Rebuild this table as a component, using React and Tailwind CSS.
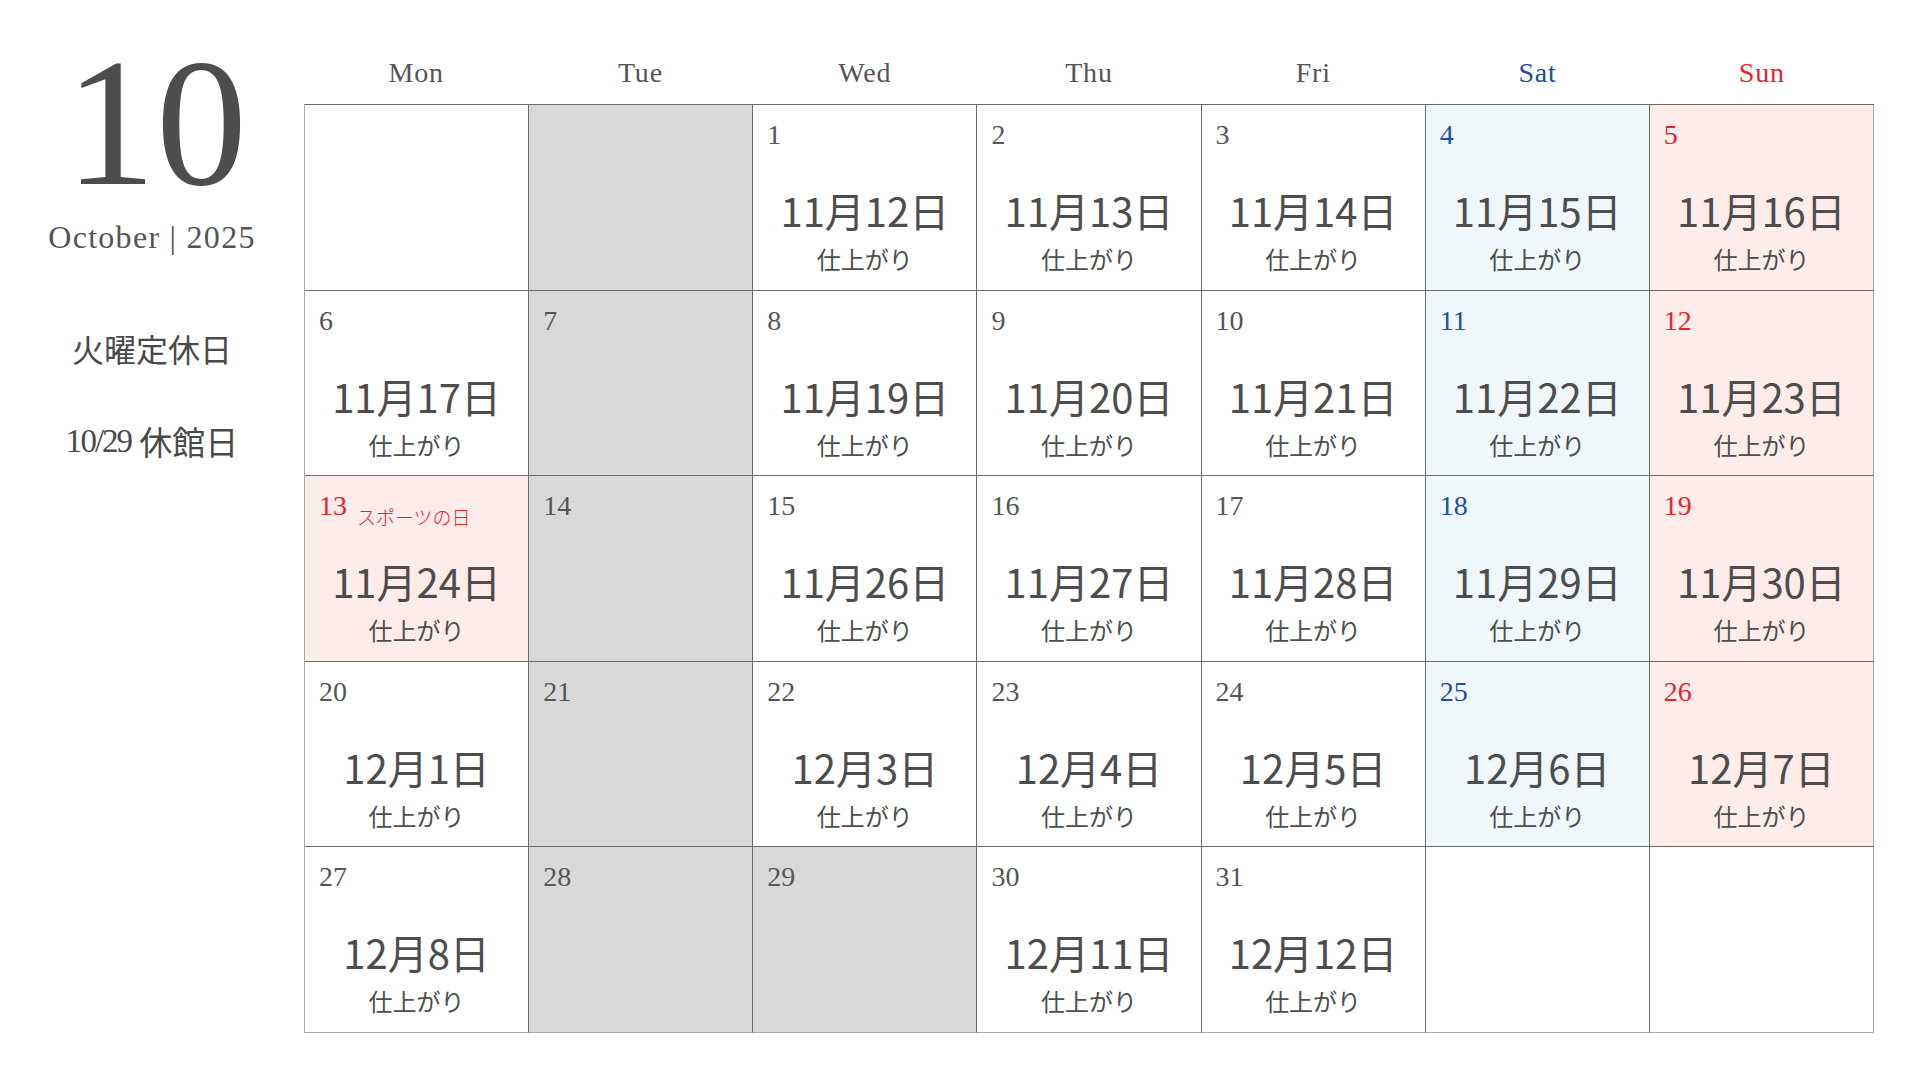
import React from 'react';

const serif = { fontFamily: '"Liberation Serif", "Noto Sans CJK JP", serif' };
const sans = { fontFamily: '"Noto Sans CJK JP", "Noto Sans", sans-serif' };

const days = ['Mon', 'Tue', 'Wed', 'Thu', 'Fri', 'Sat', 'Sun'];

// n: day number, d: finish date, off: Tuesday closed, kind: sat/sun/holiday
const weeks = [
  [{}, { off: true }, { n: 1, d: '11月12日' }, { n: 2, d: '11月13日' }, { n: 3, d: '11月14日' }, { n: 4, d: '11月15日', kind: 'sat' }, { n: 5, d: '11月16日', kind: 'sun' }],
  [{ n: 6, d: '11月17日' }, { n: 7, off: true }, { n: 8, d: '11月19日' }, { n: 9, d: '11月20日' }, { n: 10, d: '11月21日' }, { n: 11, d: '11月22日', kind: 'sat' }, { n: 12, d: '11月23日', kind: 'sun' }],
  [{ n: 13, d: '11月24日', kind: 'sun', note: 'スポーツの日' }, { n: 14, off: true }, { n: 15, d: '11月26日' }, { n: 16, d: '11月27日' }, { n: 17, d: '11月28日' }, { n: 18, d: '11月29日', kind: 'sat' }, { n: 19, d: '11月30日', kind: 'sun' }],
  [{ n: 20, d: '12月1日' }, { n: 21, off: true }, { n: 22, d: '12月3日' }, { n: 23, d: '12月4日' }, { n: 24, d: '12月5日' }, { n: 25, d: '12月6日', kind: 'sat' }, { n: 26, d: '12月7日', kind: 'sun' }],
  [{ n: 27, d: '12月8日' }, { n: 28, off: true }, { n: 29, off: true }, { n: 30, d: '12月11日' }, { n: 31, d: '12月12日' }, {}, {}],
];

const Cell = ({ c, col, row }) => {
  let bg = 'bg-white';
  if (c.off) bg = 'bg-[#d9d9d9]';
  else if (c.kind === 'sat') bg = 'bg-[#eff7fb]';
  else if (c.kind === 'sun') bg = 'bg-[#feecea]';

  let numColor = 'text-[#555555]';
  if (c.kind === 'sat') numColor = 'text-[#1c4fa2]';
  if (c.kind === 'sun') numColor = 'text-[#e4262b]';

  const right = col === 6 ? 'border-r-[#a9a9a9]' : 'border-r-[#6b6b6b]';
  const bottom = row === 4 ? 'border-b-[#a9a9a9]' : 'border-b-[#6b6b6b]';

  return (
    <div className={`flex flex-col border-r border-b ${right} ${bottom} ${bg}`}>
      <div className="flex items-end pl-[14px] pt-4 h-[44px]">
        {c.n && (
          <span className={`text-[28px] leading-none ${numColor}`} style={serif}>{c.n}</span>
        )}
        {c.note && (
          <span className="ml-[10px] mb-[-6px] text-[19px] leading-none font-light text-[#e4262b]" style={sans}>{c.note}</span>
        )}
      </div>
      {c.d && (
        <div className="flex flex-col items-center text-[#4d4d4d]" style={sans}>
          <div className="mt-[41px] text-[40px] leading-none">{c.d}</div>
          <div className="mt-[17px] text-[24px] leading-none">仕上がり</div>
        </div>
      )}
    </div>
  );
};

const App = () => {
  return (
    <div className="w-[1920px] h-[1080px] bg-white flex text-[#4a4a4a] overflow-hidden">
      <div className="w-[304px] flex flex-col items-center shrink-0">
        <div className="mt-[32px] ml-2 text-[182px] leading-none text-[#4d4d4d]" style={serif}>10</div>
        <div className="mt-[7px] text-[32px] leading-none tracking-[0.04em] text-[#555555]" style={serif}>October | 2025</div>
        <div className="mt-[79px] text-[32px] leading-none" style={sans}>火曜定休日</div>
        <div className="mt-[61px] text-[33px] leading-none flex items-center">
          <span className="tracking-[-0.06em]" style={serif}>10/29</span>
          <span className="ml-2" style={sans}>休館日</span>
        </div>
      </div>

      <div className="w-[1570px] flex flex-col">
        <div className="grid grid-cols-7 h-[104px]">
          {days.map((d) => (
            <div
              key={d}
              className={`flex items-end justify-center pb-[17px] text-[28px] leading-none tracking-[0.03em] ${d === 'Sat' ? 'text-[#1c4fa2]' : d === 'Sun' ? 'text-[#e4262b]' : 'text-[#555555]'}`}
              style={serif}
            >
              {d}
            </div>
          ))}
        </div>
        <div className="grid grid-cols-7 grid-rows-5 h-[929px] border-t border-l border-t-[#6b6b6b] border-l-[#a9a9a9]">
          {weeks.map((w, ri) => w.map((c, ci) => <Cell key={`${ri}-${ci}`} c={c} col={ci} row={ri} />))}
        </div>
      </div>
    </div>
  );
};

export default App;
